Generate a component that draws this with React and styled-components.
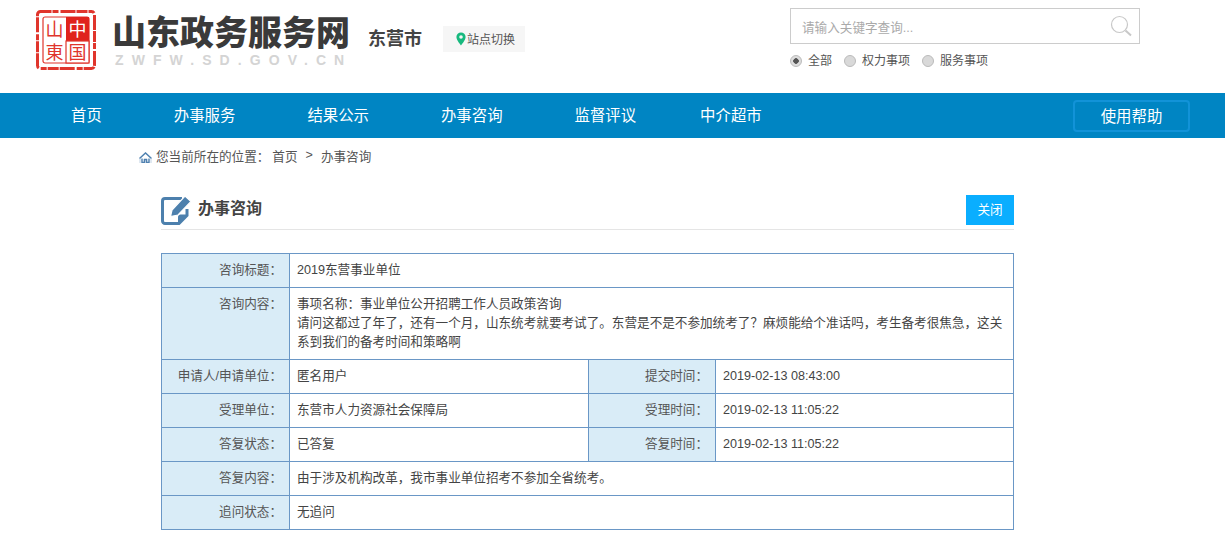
import React from "react";
import styled, { createGlobalStyle } from "styled-components";

const GlobalStyle = createGlobalStyle`
  html, body {
    margin: 0;
    padding: 0;
    background: #fff;
    font-family: "Liberation Sans", "Noto Sans CJK SC", sans-serif;
    color: #444;
  }
`;

const Page = styled.div`
  width: 1225px;
  height: 560px;
  overflow: hidden;
`;

const Header = styled.header`
  display: flex;
  height: 93px;
  padding-left: 35px;
`;

const Seal = styled.svg`
  width: 62px;
  height: 62px;
  margin-top: 9px;
  flex: none;
`;

const SealColumn = styled.text`
  writing-mode: vertical-rl;
  font-family: "Noto Sans CJK SC", sans-serif;
  font-size: 18px;
  letter-spacing: 5px;
`;

const Brand = styled.div`
  margin-left: 15px;
  width: 256px;
  flex: none;
`;

const SiteName = styled.div`
  margin-top: 15px;
  font-family: "Liberation Sans", "Noto Sans CJK SC", sans-serif;
  font-size: 34px;
  font-weight: 900;
  line-height: 36px;
  color: #3a3a3a;
  white-space: nowrap;
`;

const SiteDomain = styled.div`
  margin-top: 2px;
  padding-left: 3px;
  font-size: 14px;
  font-weight: bold;
  line-height: 14px;
  letter-spacing: 8.1px;
  color: #d4d4d4;
  white-space: nowrap;
`;

const City = styled.div`
  margin-top: 28px;
  font-size: 18px;
  font-weight: bold;
  line-height: 22px;
  color: #444;
`;

const SwitchSite = styled.div`
  display: flex;
  align-items: center;
  width: 82px;
  height: 26px;
  margin: 26px 0 0 21px;
  padding: 0 0 1px 12px;
  box-sizing: border-box;
  background: #f6f6f6;
  font-size: 12px;
  color: #555;
`;

const SearchArea = styled.div`
  width: 350px;
  margin: 8px 0 0 265px;
`;

const SearchBox = styled.div`
  display: flex;
  align-items: center;
  justify-content: space-between;
  height: 36px;
  padding: 0 7px 0 11px;
  box-sizing: border-box;
  border: 1px solid #ccc;
  font-size: 12.6px;
  color: #aaa;
`;

const RadioRow = styled.div`
  display: flex;
  align-items: center;
  margin-top: 9px;
  font-size: 12px;
  line-height: 16px;
  color: #555;
`;

const Radio = styled.span`
  width: 10px;
  height: 10px;
  border-radius: 50%;
  border: 1px solid #bbb;
  background: ${(p) =>
    p.$checked ? "radial-gradient(circle, #555 0 2.5px, #ddd 3px)" : "#d9d9d9"};
  margin-right: 6px;
`;

const RadioLabel = styled.span`
  margin-right: 12px;
`;

const Nav = styled.nav`
  display: flex;
  align-items: center;
  height: 45px;
  padding-left: 71px;
  background: #0085c3;
`;

const NavItem = styled.a`
  margin-right: ${(p) => p.$gap}px;
  padding-bottom: 4px;
  font-size: 15.4px;
  color: #fff;
  white-space: nowrap;
`;

const HelpButton = styled.a`
  display: flex;
  align-items: center;
  justify-content: center;
  width: 117px;
  height: 32px;
  margin-left: auto;
  margin-right: 35px;
  padding-bottom: 2px;
  box-sizing: border-box;
  border: 2px solid #1293d8;
  border-radius: 4px;
  font-size: 15.4px;
  color: #fff;
`;

const Crumbs = styled.div`
  display: flex;
  align-items: center;
  height: 36px;
  padding: 0 0 2px 139px;
  box-sizing: border-box;
  font-size: 12.6px;
  color: #555;
`;

const CrumbIcon = styled.svg`
  width: 13px;
  height: 11px;
  margin: 5px 4px 0 0;
`;

const CrumbLink = styled.span`
  margin-left: ${(p) => p.$gap}px;
`;

const Section = styled.main`
  width: 853px;
  margin: 21px 0 0 161px;
`;

const SectionHead = styled.div`
  display: flex;
  align-items: flex-start;
  height: 33px;
  padding-bottom: 1px;
  border-bottom: 1px solid #e5e5e5;
`;

const HeadIcon = styled.svg`
  width: 30px;
  height: 30px;
  flex: none;
`;

const HeadTitle = styled.h2`
  margin: 0 0 0 7px;
  font-size: 16px;
  font-weight: bold;
  line-height: 28px;
  color: #444;
`;

const CloseButton = styled.button`
  width: 48px;
  height: 30px;
  margin-left: auto;
  padding: 0 0 3px;
  border: 0;
  background: #0aaeff;
  color: #fff;
  font: inherit;
  font-size: 12.6px;
`;

const InfoTable = styled.table`
  width: 853px;
  margin-top: 23px;
  border-collapse: collapse;
  table-layout: fixed;
  font-size: 12.6px;
  line-height: 19px;
  color: #444;
`;

const Label = styled.th`
  padding: 7px;
  border: 1px solid #6a97c6;
  background: #d9ecf7;
  font-weight: normal;
  text-align: right;
  vertical-align: top;
  color: #555;
`;

const Cell = styled.td`
  padding: 7px;
  border: 1px solid #6a97c6;
  vertical-align: top;
`;

function SealLogo() {
  return (
    <Seal viewBox="0 0 62 62">
      <rect x="2.5" y="2.5" width="57" height="57" rx="3" fill="#fff" stroke="#e0352c" strokeWidth="3" strokeDasharray="11 1 6 2 15 1" />
      <rect x="8" y="8" width="46" height="46" rx="2" fill="none" stroke="#e0352c" strokeWidth="1.2" />
      <rect x="31" y="8" width="23" height="24" fill="#e0231c" />
      <rect x="31" y="32" width="23" height="22" fill="#fff" stroke="#e0352c" strokeWidth="1.2" />
      <SealColumn x="42.5" y="11">
        <tspan fill="#fff">中</tspan>
        <tspan fill="#e0352c">国</tspan>
      </SealColumn>
      <SealColumn x="19.5" y="11" fill="#e0352c">
        山東
      </SealColumn>
    </Seal>
  );
}

function PinIcon() {
  return (
    <svg width="12" height="14" viewBox="0 0 12 14">
      <path d="M6 0.5a4.6 4.6 0 0 0-4.6 4.6C1.4 8.4 6 13.5 6 13.5s4.6-5.1 4.6-8.4A4.6 4.6 0 0 0 6 0.5z" fill="#17b97e" />
      <circle cx="6" cy="5" r="1.8" fill="#f6f6f6" />
    </svg>
  );
}

function SearchIcon() {
  return (
    <svg width="22" height="22" viewBox="0 0 22 22" fill="none" stroke="#c8c8c8">
      <circle cx="9.5" cy="9.5" r="8" strokeWidth="1.2" />
      <path d="M15.5 15.5l5.5 5" strokeWidth="2" />
    </svg>
  );
}

function HomeIcon() {
  return (
    <CrumbIcon viewBox="0 0 13 11">
      <rect y="7" width="13" height="4" fill="#dfe8f1" />
      <path d="M0.5 6.5L6.5 1l6 5.5" fill="none" stroke="#4f81b0" strokeWidth="1.5" />
      <path d="M3 6.5V10.5h2.5V7.5h2v3H10V6.5" fill="none" stroke="#4f81b0" strokeWidth="1.3" />
    </CrumbIcon>
  );
}

function EditIcon() {
  return (
    <HeadIcon viewBox="0 0 30 30">
      <path d="M21 3.5H4a2.5 2.5 0 0 0-2.5 2.5v20A2.5 2.5 0 0 0 4 28.5h14l8-8V14" fill="none" stroke="#4d80ad" strokeWidth="3" />
      <path d="M17 29v-7a2.5 2.5 0 0 1 2.5-2.5H27z" fill="#4d80ad" />
      <path d="M9.5 21.5L11 15 24 1l6 5.5L17 20z" fill="#4d80ad" stroke="#fff" strokeWidth="1.2" />
    </HeadIcon>
  );
}

const navItems = [
  ["首页", 72],
  ["办事服务", 72],
  ["结果公示", 72],
  ["办事咨询", 72],
  ["监督评议", 64],
  ["中介超市", 0],
];

export default function App() {
  return (
    <Page>
      <GlobalStyle />
      <Header>
        <SealLogo />
        <Brand>
          <SiteName>山东政务服务网</SiteName>
          <SiteDomain>ZWFW.SD.GOV.CN</SiteDomain>
        </Brand>
        <City>东营市</City>
        <SwitchSite>
          <PinIcon />
          站点切换
        </SwitchSite>
        <SearchArea>
          <SearchBox>
            请输入关键字查询...
            <SearchIcon />
          </SearchBox>
          <RadioRow>
            <Radio $checked />
            <RadioLabel>全部</RadioLabel>
            <Radio />
            <RadioLabel>权力事项</RadioLabel>
            <Radio />
            <RadioLabel>服务事项</RadioLabel>
          </RadioRow>
        </SearchArea>
      </Header>
      <Nav>
        {navItems.map(([name, gap]) => (
          <NavItem key={name} $gap={gap}>
            {name}
          </NavItem>
        ))}
        <HelpButton>使用帮助</HelpButton>
      </Nav>
      <Crumbs>
        <HomeIcon />
        您当前所在的位置&#xFF1A;
        <CrumbLink $gap={3}>首页</CrumbLink>
        <CrumbLink $gap={8}>&gt;</CrumbLink>
        <CrumbLink $gap={8}>办事咨询</CrumbLink>
      </Crumbs>
      <Section>
        <SectionHead>
          <EditIcon />
          <HeadTitle>办事咨询</HeadTitle>
          <CloseButton>关闭</CloseButton>
        </SectionHead>
        <InfoTable>
          <colgroup>
            <col style={{ width: 128 }} />
            <col style={{ width: 299 }} />
            <col style={{ width: 127 }} />
            <col />
          </colgroup>
          <tbody>
            <tr>
              <Label>咨询标题&#xFF1A;</Label>
              <Cell colSpan={3}>2019东营事业单位</Cell>
            </tr>
            <tr>
              <Label>咨询内容&#xFF1A;</Label>
              <Cell colSpan={3}>
                事项名称&#xFF1A;事业单位公开招聘工作人员政策咨询
                <br />
                请问这都过了年了&#xFF0C;还有一个月&#xFF0C;山东统考就要考试了。东营是不是不参加统考了&#xFF1F;麻烦能给个准话吗&#xFF0C;考生备考很焦急&#xFF0C;这关系到我们的备考时间和策略啊
              </Cell>
            </tr>
            <tr>
              <Label>申请人/申请单位&#xFF1A;</Label>
              <Cell>匿名用户</Cell>
              <Label>提交时间&#xFF1A;</Label>
              <Cell>2019-02-13 08:43:00</Cell>
            </tr>
            <tr>
              <Label>受理单位&#xFF1A;</Label>
              <Cell>东营市人力资源社会保障局</Cell>
              <Label>受理时间&#xFF1A;</Label>
              <Cell>2019-02-13 11:05:22</Cell>
            </tr>
            <tr>
              <Label>答复状态&#xFF1A;</Label>
              <Cell>已答复</Cell>
              <Label>答复时间&#xFF1A;</Label>
              <Cell>2019-02-13 11:05:22</Cell>
            </tr>
            <tr>
              <Label>答复内容&#xFF1A;</Label>
              <Cell colSpan={3}>由于涉及机构改革&#xFF0C;我市事业单位招考不参加全省统考。</Cell>
            </tr>
            <tr>
              <Label>追问状态&#xFF1A;</Label>
              <Cell colSpan={3}>无追问</Cell>
            </tr>
          </tbody>
        </InfoTable>
      </Section>
    </Page>
  );
}
